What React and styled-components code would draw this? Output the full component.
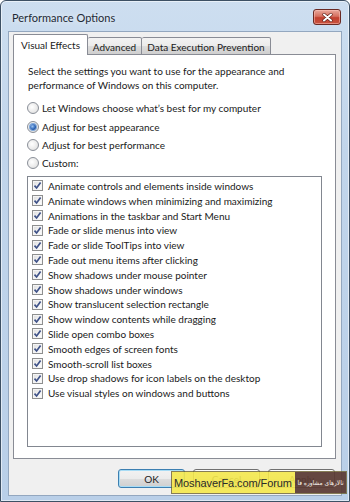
import React from 'react';
import styled, { createGlobalStyle } from 'styled-components';

const Global = createGlobalStyle`
  html, body { margin: 0; padding: 0; background: #ffffff; }
  body { font-family: Lato, "Noto Sans", sans-serif; }
  * { box-sizing: border-box; }
`;

const Window = styled.div`
  position: relative;
  width: 350px;
  height: 502px;
  border: 1px solid #3d5064;
  border-radius: 6px 6px 0 0;
  background: linear-gradient(180deg, #cddef0 0%, #c1d5eb 30%, #b9cfe8 100%);
  box-shadow: inset 0 0 0 1px rgba(255, 255, 255, 0.55);
  display: flex;
  flex-direction: column;
  padding: 0 7px 5px 7px;
  font-family: Lato, "Noto Sans", sans-serif;
  font-size: 10px;
  color: #1a1a1a;
`;

const TitleBar = styled.div`
  height: 30px;
  display: flex;
  align-items: flex-start;
  justify-content: space-between;
  padding-left: 4px;
`;

const Title = styled.div`
  margin-top: 10px;
  font-size: 11px;
  color: #1e2a36;
  text-shadow: 0 0 6px rgba(255, 255, 255, 0.9);
`;

const CloseButton = styled.div`
  margin-top: 8px;
  margin-right: 1px;
  width: 28px;
  height: 16px;
  border: 1px solid #6a2a24;
  border-radius: 3px;
  background: linear-gradient(180deg, #e8a89c 0%, #d6705f 45%, #c2402f 55%, #c8533f 100%);
  box-shadow: inset 0 0 0 1px rgba(255, 200, 190, 0.5);
  display: flex;
  align-items: center;
  justify-content: center;
`;

const Client = styled.div`
  flex: 1;
  display: flex;
  flex-direction: column;
  background: #f0f0f0;
  border: 1px solid #93a7bf;
  padding: 2px 5px 7px 4px;
`;

const TabStrip = styled.div`
  display: flex;
  align-items: flex-end;
  height: 21px;
  margin-bottom: -1px;
  position: relative;
  z-index: 1;
`;

const Tab = styled.div`
  width: ${(p) => p.$w}px;
  height: ${(p) => (p.$active ? 21 : 18)}px;
  display: flex;
  align-items: center;
  justify-content: center;
  border: 1px solid #898c95;
  border-bottom: ${(p) => (p.$active ? 'none' : '1px solid #898c95')};
  border-left: ${(p) => (p.$first || p.$active ? '1px solid #898c95' : 'none')};
  border-radius: 2px 2px 0 0;
  background: ${(p) =>
    p.$active ? '#ffffff' : 'linear-gradient(180deg, #f3f3f3 0%, #ebebeb 50%, #dddddd 51%, #cfcfcf 100%)'};
  padding-top: ${(p) => (p.$active ? 0 : 1)}px;
  white-space: nowrap;
  color: #1a1a1a;
`;

const Panel = styled.div`
  flex: 1;
  display: flex;
  flex-direction: column;
  background: #ffffff;
  border: 1px solid #898c95;
  padding: 9px 13px 11px 13px;
`;

const Description = styled.p`
  margin: 0 0 0 1px;
  line-height: 14px;
`;

const RadioGroup = styled.div`
  display: flex;
  flex-direction: column;
  margin-top: 7px;
`;

const OptionRow = styled.label`
  display: flex;
  align-items: center;
  height: ${(p) => p.$h}px;
  gap: ${(p) => p.$gap}px;
  white-space: nowrap;
`;

const RadioCircle = styled.span`
  width: 12px;
  height: 12px;
  border-radius: 50%;
  border: 1px solid #8a8f98;
  background: radial-gradient(circle at 40% 40%, #ffffff 0%, #e9e9e9 60%, #d4d4d4 100%);
  display: flex;
  align-items: center;
  justify-content: center;
  flex: none;
`;

const RadioDot = styled.span`
  width: 6px;
  height: 6px;
  border-radius: 50%;
  background: radial-gradient(circle at 40% 40%, #9cc3f0 0%, #2a64b8 55%, #14356e 100%);
  box-shadow: 0 0 0 1px #7ea7da;
`;

const ListBox = styled.div`
  flex: 1;
  margin-top: 3px;
  border: 1px solid #828790;
  background: #ffffff;
  padding: 2px 0 0 4px;
  display: flex;
  flex-direction: column;
`;

const CheckBox = styled.span`
  width: 11px;
  height: 11px;
  border: 1px solid #8e8f8f;
  background: linear-gradient(135deg, #dcdcdc 0%, #f4f4f4 60%, #ffffff 100%);
  box-shadow: inset 0 0 0 1px #f5f5f5;
  display: flex;
  align-items: center;
  justify-content: center;
  flex: none;
`;

const ButtonRow = styled.div`
  display: flex;
  justify-content: flex-end;
  gap: 8px;
  padding: 10px 1px 0 0;
`;

const Button = styled.div`
  width: 67px;
  height: 19px;
  display: flex;
  align-items: center;
  justify-content: center;
  border: 1px solid ${(p) => (p.$default ? '#3c7fb1' : '#707070')};
  border-radius: 3px;
  background: linear-gradient(180deg, #f2f2f2 0%, #ebebeb 50%, #dddddd 51%, #cfcfcf 100%);
  box-shadow: inset 0 0 0 1px ${(p) => (p.$default ? '#a8dcf5' : '#fcfcfc')};
  color: #1a1a1a;
`;

const Watermark = styled.div`
  position: absolute;
  left: 170px;
  top: 470px;
  width: 176px;
  height: 23px;
  display: flex;
  border: 1px solid rgba(107, 96, 48, 0.8);
`;

const WatermarkLatin = styled.div`
  flex: none;
  width: 123px;
  overflow: hidden;
  background: rgba(244, 232, 76, 0.9);
  color: #2a2a2a;
  font-family: "Liberation Sans", Arial, sans-serif;
  font-size: 11px;
  letter-spacing: -0.1px;
  display: flex;
  align-items: center;
  padding-left: 2px;
  white-space: nowrap;
`;

const WatermarkPersian = styled.div`
  flex: 1;
  overflow: hidden;
  background: rgba(90, 58, 52, 0.93);
  color: #f4eee8;
  font-family: "DejaVu Sans Condensed", "DejaVu Sans", sans-serif;
  font-size: 6.5px;
  display: flex;
  align-items: center;
  justify-content: center;
  white-space: nowrap;
  direction: rtl;
`;

const CloseIcon = () => (
  <svg width="11" height="9" viewBox="0 0 11 9">
    <path d="M2 1.5 L9 7.5 M9 1.5 L2 7.5" stroke="#5a1f18" strokeWidth="3.2" strokeLinecap="round" />
    <path d="M2 1.5 L9 7.5 M9 1.5 L2 7.5" stroke="#ffffff" strokeWidth="2" strokeLinecap="round" />
  </svg>
);

const CheckMark = () => (
  <svg width="9" height="9" viewBox="0 0 9 9">
    <path d="M1.5 4.6 L3.6 7 L7.6 1.5" fill="none" stroke="#3f5288" strokeWidth="1.7" />
  </svg>
);

const radios = [
  { label: "Let Windows choose what\u2019s best for my computer", checked: false },
  { label: 'Adjust for best appearance', checked: true },
  { label: 'Adjust for best performance', checked: false },
  { label: 'Custom:', checked: false },
];

const effects = [
  'Animate controls and elements inside windows',
  'Animate windows when minimizing and maximizing',
  'Animations in the taskbar and Start Menu',
  'Fade or slide menus into view',
  'Fade or slide ToolTips into view',
  'Fade out menu items after clicking',
  'Show shadows under mouse pointer',
  'Show shadows under windows',
  'Show translucent selection rectangle',
  'Show window contents while dragging',
  'Slide open combo boxes',
  'Smooth edges of screen fonts',
  'Smooth-scroll list boxes',
  'Use drop shadows for icon labels on the desktop',
  'Use visual styles on windows and buttons',
];

export default function App() {
  return (
    <>
      <Global />
      <Window>
        <TitleBar>
          <Title>Performance Options</Title>
          <CloseButton>
            <CloseIcon />
          </CloseButton>
        </TitleBar>
        <Client>
          <TabStrip>
            <Tab $active $first $w={75}>Visual Effects</Tab>
            <Tab $w={54}>Advanced</Tab>
            <Tab $w={129}>Data Execution Prevention</Tab>
          </TabStrip>
          <Panel>
            <Description>
              Select the settings you want to use for the appearance and
              <br />
              performance of Windows on this computer.
            </Description>
            <RadioGroup>
              {radios.map((r) => (
                <OptionRow key={r.label} $h={18.4} $gap={3}>
                  <RadioCircle>{r.checked && <RadioDot />}</RadioCircle>
                  {r.label}
                </OptionRow>
              ))}
            </RadioGroup>
            <ListBox>
              {effects.map((e) => (
                <OptionRow key={e} $h={14.8} $gap={5}>
                  <CheckBox>
                    <CheckMark />
                  </CheckBox>
                  {e}
                </OptionRow>
              ))}
            </ListBox>
          </Panel>
          <ButtonRow>
            <Button $default>OK</Button>
            <Button>Cancel</Button>
            <Button>Apply</Button>
          </ButtonRow>
        </Client>
        <Watermark>
          <WatermarkLatin>MoshaverFa.com/Forum</WatermarkLatin>
          <WatermarkPersian>تالارهای مشاوره فا</WatermarkPersian>
        </Watermark>
      </Window>
    </>
  );
}
